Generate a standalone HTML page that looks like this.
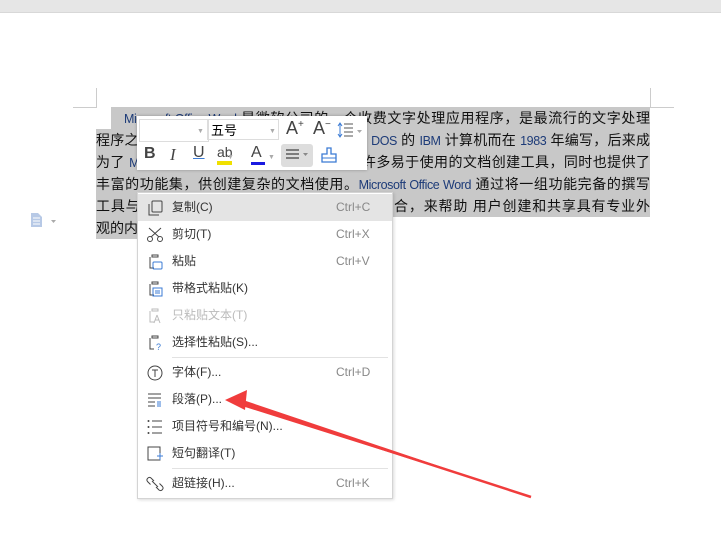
<!DOCTYPE html>
<html><head><meta charset="utf-8"><style>
body{margin:0;width:721px;height:552px;background:#fff;position:relative;overflow:hidden;font-family:"Liberation Sans","Noto Sans CJK SC",sans-serif;}
.top{position:absolute;left:0;top:0;width:721px;height:12px;background:#e6e6e6;border-bottom:1px solid #d8d8d8}
.ln{position:absolute;height:22px;line-height:22px;background:#c8c8c8;font-size:14px;color:#111;text-align:justify;text-align-last:justify;white-space:nowrap;overflow:hidden}
.ln b{font-weight:normal;color:#1d3b78;font-size:12.5px;letter-spacing:-0.4px}
.tb{position:absolute;left:137px;top:116px;width:230px;height:54px;background:#fff;box-shadow:0 0 3px rgba(0,0,0,.3)}
.menu{position:absolute;left:137px;top:192px;width:254px;height:305px;background:#fff;border:1px solid #d4d4d4;box-shadow:1px 1px 3px rgba(0,0,0,.15)}
.it{position:absolute;left:0;width:254px;height:27px;line-height:27px;font-size:12px;color:#333}
.it .t{position:absolute;left:34px}
.it .k{position:absolute;left:198px;color:#888}
.it svg{position:absolute;left:8px;top:5px}
.sep{position:absolute;left:34px;width:216px;height:1px;background:#e2e2e2}
</style></head><body>
<div class="top"></div>
<div style="position:absolute;left:96px;top:88px;width:1px;height:20px;background:#ccc"></div>
<div style="position:absolute;left:73px;top:107px;width:24px;height:1px;background:#ccc"></div>
<div style="position:absolute;left:650px;top:88px;width:1px;height:20px;background:#ccc"></div>
<div style="position:absolute;left:650px;top:107px;width:24px;height:1px;background:#ccc"></div>
<div class="ln" style="left:111px;top:107px;width:539px;padding-left:13px;box-sizing:border-box"><b>Microsoft Office Word</b> 是微软公司的一个收费文字处理应用程序，是最流行的文字处理</div>
<div class="ln" style="left:96px;top:129px;width:554px">程序之一。它最初是由 <b>Richard Brodie</b> 为运行 <b>DOS</b> 的 <b>IBM</b> 计算机而在 <b>1983</b> 年编写，后来成</div>
<div class="ln" style="left:96px;top:151px;width:554px">为了 <b>Microsoft Office</b> 的一部分。<b>Word</b> 提供了许多易于使用的文档创建工具，同时也提供了</div>
<div class="ln" style="left:96px;top:173px;width:554px">丰富的功能集，供创建复杂的文档使用。<b>Microsoft Office Word</b> 通过将一组功能完备的撰写</div>
<div class="ln" style="left:96px;top:195px;width:554px">工具与易于使用的 <b>Microsoft Office</b> 用户界面相结合，来帮助 用户创建和共享具有专业外</div>
<div class="ln" style="left:96px;top:217px;width:70px;text-align:left;text-align-last:left">观的内容。</div>
<svg style="position:absolute;left:30px;top:212px" width="28" height="16"><path d="M1 1h7l4 4v10H1z" fill="#b7c9e6"/><path d="M3 6h7M3 9h7M3 12h7" stroke="#fff"/><path d="M21 8h5l-2.5 3z" fill="#aaa"/></svg>
<div class="tb">
<div style="position:absolute;left:2px;top:3px;width:68px;height:21px;border:1px solid #ddd"></div>
<div style="position:absolute;left:70px;top:3px;width:72px;height:21px;border:1px solid #ddd;font-size:13px;line-height:21px;padding-left:3px;box-sizing:border-box">五号</div>
<div style="position:absolute;left:60px;top:12px;font-size:7px;color:#aaa">▼</div>
<div style="position:absolute;left:132px;top:12px;font-size:7px;color:#aaa">▼</div>
<div style="position:absolute;left:149px;top:2px;font-size:18px;color:#444">A<sup style="font-size:10px">+</sup></div>
<div style="position:absolute;left:176px;top:2px;font-size:18px;color:#444">A<sup style="font-size:10px">−</sup></div>
<svg style="position:absolute;left:200px;top:6px" width="26" height="16"><path d="M7 2h9M7 6h9M7 10h9M7 14h9" stroke="#555"/><path d="M3 1v14M1 4l2-3 2 3M1 12l2 3 2-3" stroke="#3b7bd4" fill="none"/><path d="M20 8h5l-2.5 3z" fill="#aaa"/></svg>
<div style="position:absolute;left:7px;top:29px;font-size:16px;font-weight:bold;color:#444">B</div>
<div style="position:absolute;left:33px;top:29px;font-size:17px;font-style:italic;color:#444;font-family:'Liberation Serif',serif">I</div>
<div style="position:absolute;left:56px;top:28px;font-size:16px;color:#444;text-decoration:underline;text-decoration-color:#3b7bd4">U</div>
<div style="position:absolute;left:80px;top:28px;font-size:14px;color:#444">ab</div>
<div style="position:absolute;left:80px;top:45px;width:15px;height:4px;background:#f0e000"></div>
<div style="position:absolute;left:114px;top:28px;font-size:16px;color:#444">A</div>
<div style="position:absolute;left:114px;top:46px;width:14px;height:3px;background:#1a1ae0"></div>
<div style="position:absolute;left:144px;top:28px;width:32px;height:23px;background:#ddd;border-radius:3px"></div>
<svg style="position:absolute;left:148px;top:31px" width="28" height="16"><path d="M1 3h13M1 7h13M1 11h13" stroke="#444" stroke-width="1.3"/><path d="M18 6h5l-2.5 3z" fill="#888"/></svg>
<svg style="position:absolute;left:183px;top:31px" width="18" height="18"><path d="M7 1h4v6h5v8H2V7h5z" fill="none" stroke="#3b7bd4" stroke-width="1.3"/><path d="M2 11h14" stroke="#3b7bd4"/></svg>
<div style="position:absolute;left:90px;top:38px;font-size:7px;color:#aaa">▼</div>
<div style="position:absolute;left:131px;top:38px;font-size:7px;color:#aaa">▼</div>
</div>
<div class="menu">
<div class="it" style="top:1px;background:#e4e4e4"><svg width="18" height="18"><rect x="6" y="2" width="10" height="11" rx="1" fill="none" stroke="#444"/><path d="M3 5v11h10" fill="none" stroke="#444"/></svg><span class="t">复制(C)</span><span class="k">Ctrl+C</span></div>
<div class="it" style="top:28px"><svg width="18" height="18"><circle cx="4" cy="13" r="2.5" fill="none" stroke="#444"/><circle cx="14" cy="13" r="2.5" fill="none" stroke="#444"/><path d="M3 2l10 9M15 2L5 11" stroke="#444"/></svg><span class="t">剪切(T)</span><span class="k">Ctrl+X</span></div>
<div class="it" style="top:55px"><svg width="18" height="18"><path d="M6 2h6v2H6zM4 4v11h4" fill="none" stroke="#444"/><rect x="7" y="9" width="9" height="7" rx="1" fill="none" stroke="#3b7bd4"/></svg><span class="t">粘贴</span><span class="k">Ctrl+V</span></div>
<div class="it" style="top:82px"><svg width="18" height="18"><path d="M6 2h6v2H6zM4 4v11h4" fill="none" stroke="#444"/><rect x="7" y="8" width="9" height="8" fill="none" stroke="#3b7bd4"/><path d="M9 11h5M9 13h5" stroke="#3b7bd4"/></svg><span class="t">带格式粘贴(K)</span></div>
<div class="it" style="top:109px;color:#bbb"><svg width="18" height="18"><path d="M6 2h6v2H6zM4 4v11h4M11 8l-3 8M11 8l3 8M9 13h4" fill="none" stroke="#bbb"/></svg><span class="t">只粘贴文本(T)</span></div>
<div class="it" style="top:136px"><svg width="18" height="18"><path d="M6 2h6v2H6zM4 4v11h4" fill="none" stroke="#444"/><text x="10" y="16" font-size="9" fill="#3b7bd4">?</text></svg><span class="t">选择性粘贴(S)...</span></div>
<div class="sep" style="top:164px"></div>
<div class="it" style="top:166px"><svg width="18" height="18"><circle cx="9" cy="9" r="7" fill="none" stroke="#444"/><path d="M6 6h6M9 6v7" stroke="#444"/></svg><span class="t">字体(F)...</span><span class="k">Ctrl+D</span></div>
<div class="it" style="top:193px"><svg width="18" height="18"><path d="M2 3h13M2 7h13M2 11h7M2 15h7" stroke="#444"/><path d="M12 10v6M14 10v6" stroke="#3b7bd4"/></svg><span class="t">段落(P)...</span></div>
<div class="it" style="top:220px"><svg width="18" height="18"><path d="M6 3h10M6 9h10M6 15h10" stroke="#444"/><circle cx="2.5" cy="3" r="1" fill="#444"/><circle cx="2.5" cy="9" r="1" fill="#444"/><circle cx="2.5" cy="15" r="1" fill="#444"/></svg><span class="t">项目符号和编号(N)...</span></div>
<div class="it" style="top:247px"><svg width="18" height="18"><rect x="2" y="2" width="12" height="13" fill="none" stroke="#444"/><path d="M11 11h6M14 8v7" stroke="#3b7bd4"/></svg><span class="t">短句翻译(T)</span></div>
<div class="sep" style="top:275px"></div>
<div class="it" style="top:277px"><svg width="18" height="18"><path d="M8 6l-3-3a2.5 2.5 0 0 0-3.5 3.5l3 3M10 12l3 3a2.5 2.5 0 0 0 3.5-3.5l-3-3M6 6l6 6" fill="none" stroke="#444"/></svg><span class="t">超链接(H)...</span><span class="k">Ctrl+K</span></div>
</div>
<svg style="position:absolute;left:0;top:0" width="721" height="552"><path d="M531 497L242 406l1 -6z" fill="#f03c3c"/><path d="M531 497L244 404" stroke="#f03c3c" stroke-width="2.5"/><path d="M225 400l22-10-2 20z" fill="#f03c3c"/></svg>
</body></html>
